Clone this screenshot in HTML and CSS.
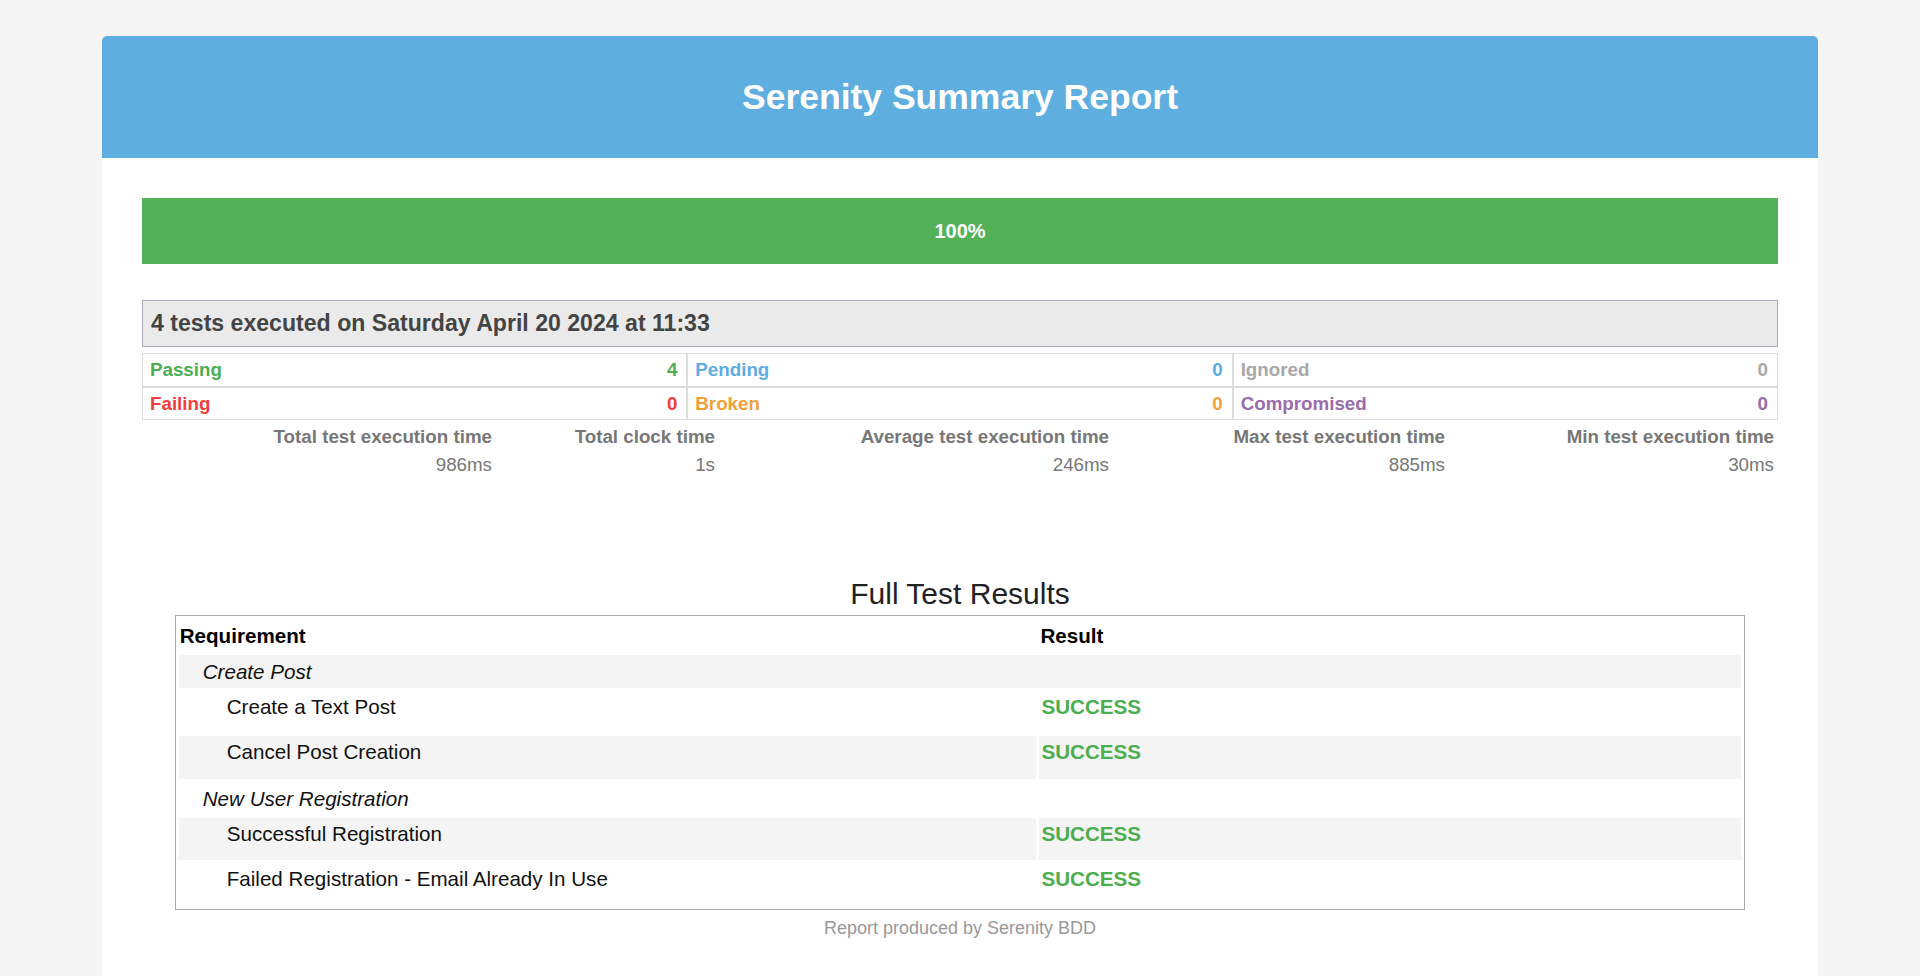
FILE: index.html
```html
<!DOCTYPE html>
<html lang="en">
<head>
<meta charset="utf-8">
<title>Serenity Summary Report</title>
<link rel="stylesheet" href="styles.css">
</head>
<body>
<div class="card">
  <div class="card-header">
    <h1 class="title">Serenity Summary Report</h1>
  </div>
  <div class="card-body">
    <div class="progress">100%</div>

    <div class="summary-title">4 tests executed on Saturday April 20 2024 at 11:33</div>

    <div class="stats">
      <div class="stat"><span class="c-pass">Passing</span><span class="c-pass">4</span></div>
      <div class="stat"><span class="c-pend">Pending</span><span class="c-pend">0</span></div>
      <div class="stat"><span class="c-ign">Ignored</span><span class="c-ign">0</span></div>
      <div class="stat"><span class="c-fail">Failing</span><span class="c-fail">0</span></div>
      <div class="stat"><span class="c-brok">Broken</span><span class="c-brok">0</span></div>
      <div class="stat"><span class="c-comp">Compromised</span><span class="c-comp">0</span></div>
    </div>

    <table class="times">
      <colgroup>
        <col class="t1"><col class="t2"><col class="t3"><col class="t4"><col class="t5">
      </colgroup>
      <tr class="time-labels">
        <th>Total test execution time</th>
        <th>Total clock time</th>
        <th>Average test execution time</th>
        <th>Max test execution time</th>
        <th>Min test execution time</th>
      </tr>
      <tr class="time-values">
        <td>986ms</td>
        <td>1s</td>
        <td>246ms</td>
        <td>885ms</td>
        <td>30ms</td>
      </tr>
    </table>

    <div class="results-title">Full Test Results</div>
    <table class="results">
      <colgroup><col class="col-req"><col class="col-res"></colgroup>
      <tr>
        <th class="head">Requirement</th>
        <th class="head">Result</th>
      </tr>
      <tr class="alt">
        <td class="group" colspan="2">Create Post</td>
      </tr>
      <tr>
        <td class="test">Create a Text Post</td>
        <td class="result">SUCCESS</td>
      </tr>
      <tr class="alt">
        <td class="test">Cancel Post Creation</td>
        <td class="result">SUCCESS</td>
      </tr>
      <tr>
        <td class="group" colspan="2">New User Registration</td>
      </tr>
      <tr class="alt">
        <td class="test">Successful Registration</td>
        <td class="result">SUCCESS</td>
      </tr>
      <tr>
        <td class="test">Failed Registration - Email Already In Use</td>
        <td class="result">SUCCESS</td>
      </tr>
    </table>
    <div class="footer">Report produced by Serenity BDD</div>
  </div>
</div>
</body>
</html>
```

FILE: styles.css
```css
html, body {
  margin: 0;
  padding: 0;
}
body {
  background: #f5f5f5;
  font-family: "Liberation Sans", Arial, sans-serif;
  padding-top: 36px;
}
.card {
  width: 1716px;
  margin: 0 auto;
  background: #ffffff;
  border-radius: 5px 5px 0 0;
}
.card-header {
  background: #5eaee0;
  border-radius: 5px 5px 0 0;
  height: 122px;
  display: flex;
  align-items: center;
  justify-content: center;
}
.title {
  margin: 0;
  color: #ffffff;
  font-size: 35.5px;
  font-weight: bold;
  line-height: 40px;
}
.card-body {
  padding: 40px 40px 40px;
}
.progress {
  background: #53b257;
  color: #ffffff;
  font-weight: bold;
  font-size: 20px;
  height: 66px;
  line-height: 66px;
  text-align: center;
}
.summary-title {
  margin-top: 36px;
  background: #eaeaea;
  border: 1px solid #a9adbb;
  color: #444444;
  font-weight: bold;
  font-size: 23.1px;
  line-height: 26px;
  padding: 9px 8px 10px;
}
.stats {
  margin-top: 6px;
  display: grid;
  grid-template-columns: 1fr 1fr 1fr;
}
.stat {
  border: 1px solid #dddddd;
  display: flex;
  justify-content: space-between;
  font-weight: bold;
  font-size: 18.75px;
  line-height: 21.5px;
  padding: 5px 9px 5px 7px;
}
.c-pass { color: #4cae50; }
.c-pend { color: #5dade2; }
.c-ign  { color: #a8a8a8; }
.c-fail { color: #f23c3c; }
.c-brok { color: #f0a035; }
.c-comp { color: #9b6aac; }

.times {
  width: 100%;
  margin-top: 3px;
  border-collapse: collapse;
  table-layout: fixed;
  color: #777777;
  font-size: 18.75px;
}
.t1 { width: 354px; }
.t2 { width: 223px; }
.t3 { width: 394px; }
.t4 { width: 336px; }
.t5 { width: 329px; }
.times th, .times td {
  text-align: right;
  padding: 3px 4px;
  line-height: 21.6px;
  white-space: nowrap;
}
.times th {
  font-weight: bold;
}
.times td {
  font-weight: normal;
}

.results-title {
  margin-top: 99px;
  margin-bottom: 4px;
  text-align: center;
  color: #222222;
  font-size: 30px;
  line-height: 34px;
}
.results {
  width: 96%;
  margin: 0 auto;
  border: 1px solid #a9a9b1;
  border-spacing: 3px;
  font-size: 20.6px;
  color: #111111;
}
.col-req { width: 55%; }
.col-res { width: 45%; }
.results th, .results td {
  text-align: left;
  vertical-align: top;
  line-height: 23.7px;
}
.results th.head {
  font-weight: bold;
  color: #000000;
  padding: 5px 2px 4px 1px;
}
.results tr.alt td {
  background: #f4f4f4;
}
.results td.group {
  font-style: italic;
  padding: 5px 4px 4px 24px;
}
.results td.test {
  padding: 4px 4px 15px 48px;
}
.results td.result {
  padding: 4px 2px 15px;
  color: #4cae50;
  font-weight: bold;
}
.footer {
  padding-top: 8px;
  text-align: center;
  color: #999999;
  font-size: 18px;
  line-height: 21px;
}
```
